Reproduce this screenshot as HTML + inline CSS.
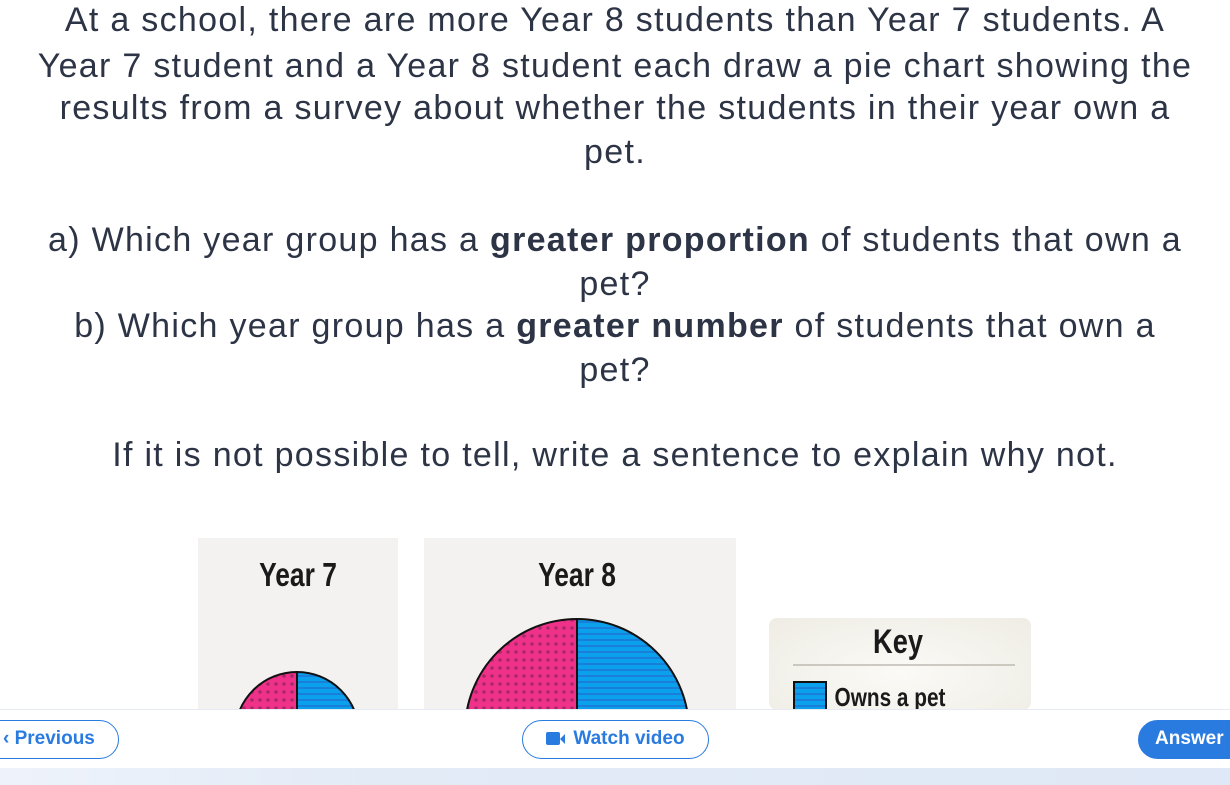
<!DOCTYPE html>
<html><head><meta charset="utf-8"><style>
*{margin:0;padding:0;box-sizing:border-box}
body{width:1230px;height:785px;overflow:hidden;background:#fff;font-family:"Liberation Sans",Arial,sans-serif;color:#2c3445;position:relative}
.l{position:absolute;left:0;width:1230px;text-align:center;white-space:nowrap;font-size:34px;letter-spacing:1.3px;line-height:40px}
b{font-weight:bold}
.panel{position:absolute;background:#f3f2f0}
.cond{font-family:"Liberation Sans Narrow","Liberation Sans",sans-serif;font-weight:bold;color:#1a1a1a;position:absolute;text-align:center;transform:scaleX(.8)}
.footer{position:absolute;left:0;top:709px;width:1230px;height:59px;background:#fff;border-top:1px solid #e6ebf3}
.bottom{position:absolute;left:0;top:768px;width:1230px;height:17px;background:linear-gradient(90deg,#eef3fb,#e3ebf7 30%,#dfe8f6)}
.btn{position:absolute;top:720px;height:39px;border:1.5px solid #2a7be0;border-radius:20px;color:#2a7be0;font-weight:bold;font-size:19px;line-height:36px}
</style></head><body>
<div class="l" style="top:0">At a school, there are more Year 8 students than Year 7 students. A</div>
<div class="l" style="top:46px">Year 7 student and a Year 8 student each draw a pie chart showing the</div>
<div class="l" style="top:88px">results from a survey about whether the students in their year own a</div>
<div class="l" style="top:132px">pet.</div>
<div class="l" style="top:220px">a) Which year group has a <b>greater proportion</b> of students that own a</div>
<div class="l" style="top:264px">pet?</div>
<div class="l" style="top:306px">b) Which year group has a <b>greater number</b> of students that own a</div>
<div class="l" style="top:350px">pet?</div>
<div class="l" style="top:435px">If it is not possible to tell, write a sentence to explain why not.</div>

<div class="panel" style="left:198px;top:538px;width:200px;height:172px"></div>
<div class="panel" style="left:424px;top:538px;width:312px;height:172px"></div>
<div class="panel" style="left:769px;top:618px;width:262px;height:92px;border-radius:8px;background:radial-gradient(ellipse at 50% 60%,#fbfaf6,#eeece4)"></div>
<svg style="position:absolute;left:0;top:0" width="1230" height="710">
<defs>
<pattern id="dots" width="8" height="8" patternUnits="userSpaceOnUse"><rect width="8" height="8" fill="#f0318a"/><circle cx="4" cy="4" r="1.8" fill="#a82868"/></pattern>
<pattern id="str" width="6" height="6" patternUnits="userSpaceOnUse"><rect width="6" height="6" fill="#0aa0ec"/><rect y="3" width="6" height="2" fill="#1a7fd8"/></pattern>
</defs>
<path d="M577 731 L577 619 A112 112 0 0 0 465 731 Z" fill="url(#dots)" stroke="#111" stroke-width="2"/>
<path d="M577 731 L577 619 A112 112 0 0 1 689 731 Z" fill="url(#str)" stroke="#111" stroke-width="2"/>
<path d="M297 734 L297 672 A62 62 0 0 0 235 734 Z" fill="url(#dots)" stroke="#111" stroke-width="2"/>
<path d="M297 734 L297 672 A62 62 0 0 1 359 734 Z" fill="url(#str)" stroke="#111" stroke-width="2"/>
<line x1="793" y1="665" x2="1015" y2="665" stroke="#bdbab2" stroke-width="1.5"/>
<rect x="794" y="682" width="32" height="30" fill="url(#str)" stroke="#111" stroke-width="2"/>
</svg>
<div class="cond" style="left:248px;top:556px;width:100px;font-size:33px">Year 7</div>
<div class="cond" style="left:527px;top:556px;width:100px;font-size:33px">Year 8</div>
<div class="cond" style="left:848px;top:623px;width:100px;font-size:34px">Key</div>
<div class="cond" style="left:820px;top:682px;width:140px;font-size:26px">Owns a pet</div>

<div class="footer"></div>
<div class="bottom"></div>
<div class="btn" style="left:-20px;width:139px;padding-left:22px">&#8249; Previous</div>
<div class="btn" style="left:522px;width:187px;text-align:center"><span style="display:inline-block;width:14px;height:13px;background:#2a7be0;border-radius:2px;vertical-align:-1px"></span><span style="display:inline-block;width:0;height:0;border-top:5px solid transparent;border-bottom:5px solid transparent;border-right:5px solid #2a7be0;vertical-align:0;margin-right:8px"></span>Watch video</div>
<div class="btn" style="left:1138px;width:120px;background:#2a7be0;color:#fff;padding-left:16px">Answer</div>
</body></html>
